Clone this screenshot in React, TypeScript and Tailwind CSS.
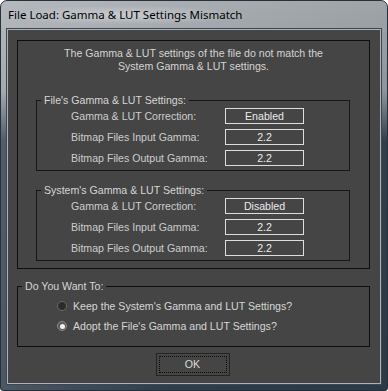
import React from 'react'

const body = "font-['Liberation_Sans',Arial,sans-serif] text-[10.6px] leading-[13px]"

interface RowProps {
  label: string
  value: string
}

function ValueRow({ label, value }: RowProps) {
  return (
    <div className="flex items-center h-4">
      <div className="w-[188px] pl-[34px] text-[#cdcdcd]">{label}</div>
      <div className="w-[79px] h-4 border border-[#dedede] flex items-center justify-center text-[#ececec]">
        {value}
      </div>
    </div>
  )
}

interface GroupProps {
  title: string
  rows: RowProps[]
}

function SettingsGroup({ title, rows }: GroupProps) {
  return (
    <fieldset className="ml-[18px] mr-[19px] border border-[#161616] pb-1">
      <legend className="ml-[4px] px-[3px] leading-[14px] text-[#d6d6d6]">{title}</legend>
      <div className="flex flex-col gap-[5px] pt-[1px]">
        {rows.map((r) => (
          <ValueRow key={r.label} label={r.label} value={r.value} />
        ))}
      </div>
    </fieldset>
  )
}

function Radio({ checked, label }: { checked?: boolean; label: string }) {
  return (
    <div className="flex items-center h-[14px] pl-[39px]">
      <span
        className={
          checked
            ? 'w-[10px] h-[10px] rounded-full border border-[#8a8a8a] bg-[#5a5a5a] flex items-center justify-center'
            : 'w-[10px] h-[10px] rounded-full border border-[#6a6a6a] bg-[#2b2b2b]'
        }
      >
        {checked && <span className="w-[5px] h-[5px] rounded-full bg-[#f2f2f2]" />}
      </span>
      <span className="ml-[6px] text-[#d6d6d6]">{label}</span>
    </div>
  )
}

export default function App() {
  const fileRows = [
    { label: 'Gamma & LUT Correction:', value: 'Enabled' },
    { label: 'Bitmap Files Input Gamma:', value: '2.2' },
    { label: 'Bitmap Files Output Gamma:', value: '2.2' },
  ]
  const systemRows = [
    { label: 'Gamma & LUT Correction:', value: 'Disabled' },
    { label: 'Bitmap Files Input Gamma:', value: '2.2' },
    { label: 'Bitmap Files Output Gamma:', value: '2.2' },
  ]

  return (
    <div className="w-[388px] h-[391px] rounded-t-[7px] rounded-b-[3px] border border-[#27313b] bg-[linear-gradient(90deg,rgba(255,255,255,0.14),rgba(255,255,255,0)_45%,rgba(0,0,0,0.06)),linear-gradient(180deg,#a9aeb3_0px,#979da3_90px,#34424f_140px,#2e3c4a_100%)] flex flex-col px-[6px] pb-[6px]">
      {/* title bar */}
      <div className="h-[28px] flex items-center pl-[1px]">
        <span className="px-[2px] -ml-[2px] font-['Noto_Sans',sans-serif] text-[11.5px] text-black bg-[radial-gradient(ellipse_at_center,rgba(255,255,255,0.35),rgba(255,255,255,0)_75%)]">
          File Load: Gamma &amp; LUT Settings Mismatch
        </span>
      </div>

      {/* client area */}
      <div className={`flex-1 border border-[#aab3bc] shadow-[0_0_0_1px_#3b4651] bg-[#454545] flex flex-col ${body}`}>
        <div className="mt-[10px] ml-[9px] mr-[10px] h-[229px] border border-[#0e0e0e] flex flex-col">
          <p className="pt-[6px] text-center text-[#d4d4d4]">
            The Gamma &amp; LUT settings of the file do not match the
            <br />
            System Gamma &amp; LUT settings.
          </p>
          <div className="mt-[20px] flex flex-col gap-[12px]">
            <SettingsGroup title="File's Gamma & LUT Settings:" rows={fileRows} />
            <SettingsGroup title="System's Gamma & LUT Settings:" rows={systemRows} />
          </div>
        </div>

        <fieldset className="mt-[10px] ml-[9px] mr-[10px] border border-[#0e0e0e] pt-[6px] pb-[13px]">
          <legend className="ml-[4px] px-[3px] leading-[14px] text-[#d6d6d6]">Do You Want To:</legend>
          <div className="flex flex-col gap-[6px]">
            <Radio label="Keep the System's Gamma and LUT Settings?" />
            <Radio checked label="Adopt the File's Gamma and LUT Settings?" />
          </div>
        </fieldset>

        <div className="mt-[6px] flex justify-center pr-[3px]">
          <button className="w-[74px] h-[23px] border border-[#242424] bg-[#454545] p-[2px]">
            <span className="w-full h-full border border-dotted border-[#0a0a0a] flex items-center justify-center text-[#dcdcdc]">
              OK
            </span>
          </button>
        </div>
      </div>
    </div>
  )
}
